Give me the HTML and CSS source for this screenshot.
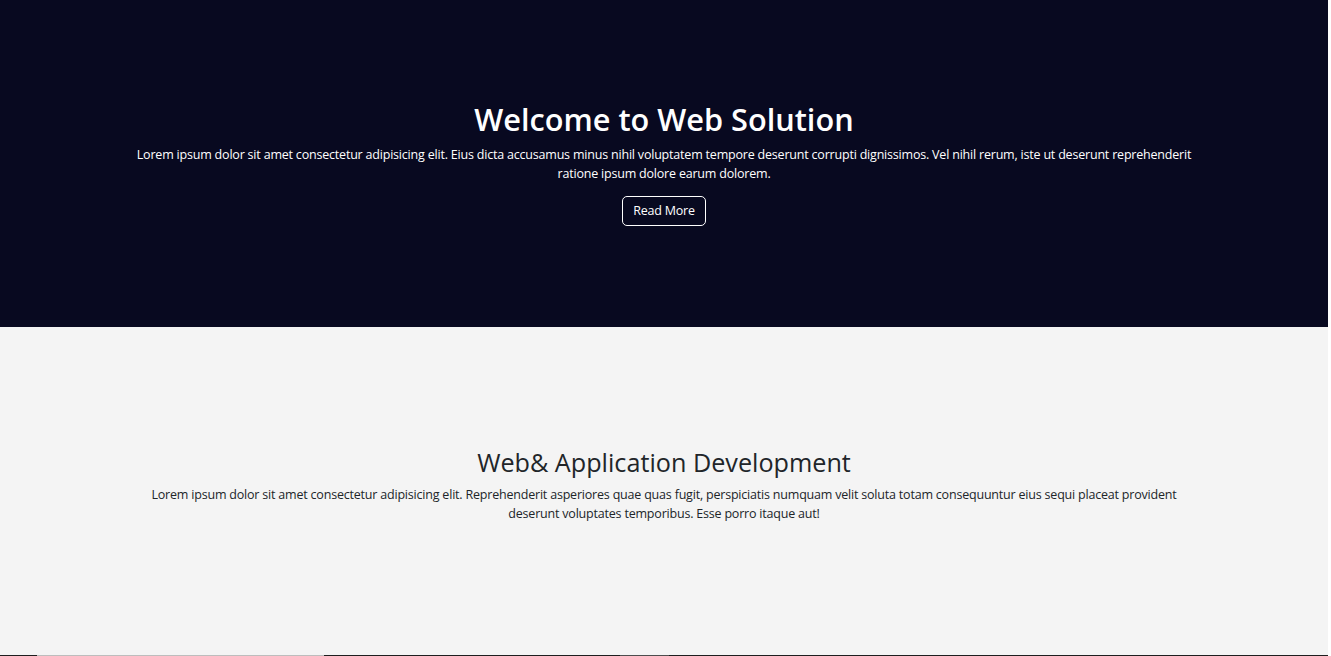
FILE: index.html
```html
<!DOCTYPE html>
<html lang="en">
<head>
<meta charset="utf-8">
<title>Web Solution</title>
<link rel="stylesheet" href="styles.css">
</head>
<body>
<div class="page">
  <section class="hero">
    <div class="container">
      <h1 class="hero-title">Welcome to Web Solution</h1>
      <p class="hero-text">Lorem ipsum dolor sit amet consectetur adipisicing elit. Eius dicta accusamus minus nihil voluptatem tempore deserunt corrupti dignissimos. Vel nihil rerum, iste ut deserunt reprehenderit ratione ipsum dolore earum dolorem.</p>
      <a class="btn-outline" href="#">Read More</a>
    </div>
  </section>
  <section class="service">
    <div class="container">
      <h2 class="service-title">Web&amp; Application Development</h2>
      <p class="service-text">Lorem ipsum dolor sit amet consectetur adipisicing elit. Reprehenderit asperiores quae quas fugit, perspiciatis numquam velit soluta totam consequuntur eius sequi placeat provident deserunt voluptates temporibus. Esse porro itaque aut!</p>
    </div>
  </section>
  <section class="gallery">
    <div class="strip">
      <div class="tile tile-dark t1"></div>
      <div class="tile tile-light t2"></div>
      <div class="tile tile-dark t3"></div>
      <div class="tile tile-mid t4"></div>
      <div class="tile tile-dark t5"></div>
    </div>
  </section>
</div>
</body>
</html>
```

FILE: styles.css
```css
* { box-sizing: border-box; }
html { background: #ffffff; }
body {
  margin: 0;
  font-family: "Open Sans", "Noto Sans", sans-serif;
  font-size: 12.5px;
  letter-spacing: -0.2px;
  line-height: 19px;
  color: #212529;
}
.page {
  width: calc(100% - 3px);
}
.container {
  max-width: 1088px;
  margin: 0 auto;
  padding: 0 12px;
  text-align: center;
  display: flex;
  flex-direction: column;
  align-items: center;
}
.hero {
  height: 327px;
  background: #080920;
  color: #ffffff;
  display: flex;
  align-items: center;
  justify-content: center;
}
.hero-title {
  margin: 0 0 7px;
  font-size: 30.7px;
  font-weight: 600;
  letter-spacing: 0;
  line-height: 1.2;
}
.hero-text {
  margin: 0 0 13px;
}
.btn-outline {
  display: inline-block;
  color: #ffffff;
  text-decoration: none;
  border: 1px solid #ffffff;
  border-radius: 5px;
  padding: 5px 10px;
  font-size: 12.5px;
  line-height: 18px;
}
.service {
  height: 328px;
  padding-bottom: 12px;
  background: #f4f4f4;
  display: flex;
  align-items: center;
  justify-content: center;
}
.service-title {
  margin: 0 0 7px;
  font-size: 25.2px;
  font-weight: 500;
  letter-spacing: 0;
  line-height: 1.2;
}
.service-text {
  margin: 0;
}
.gallery {
  background: #1e1e1e;
  height: 200px;
}
.strip {
  display: flex;
  height: 200px;
}
.tile-dark { background: #1e1e1e; }
.tile-light { background: #bdbdbd; }
.tile-mid { background: #4d4d4d; }
.t1 { width: 37px; }
.t2 { width: 287px; }
.t3 { width: 296px; }
.t4 { width: 49px; }
.t5 { flex: 1; }
```
